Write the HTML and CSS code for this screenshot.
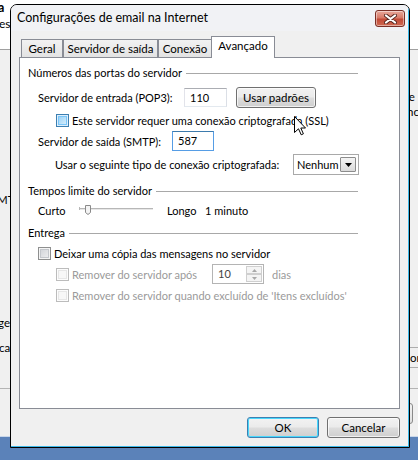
FILE: index.html
```html
<!DOCTYPE html>
<html lang="pt">
<head>
<meta charset="utf-8">
<link rel="stylesheet" href="styles.css">
</head>
<body>
<div class="backwin">
  <div class="backtop"></div>
  <div class="backline"></div>
  <span class="frag f-a">a</span>
  <span class="frag f-es">es</span>
  <span class="frag f-mt">MT</span>
  <span class="frag f-gen">gen</span>
  <span class="frag f-ca">ca</span>
  <span class="frag f-ie">ie</span>
  <span class="frag f-nc">nc</span>
  <div class="frag f-orbox">or</div>
  <div class="frag f-btn"></div>
</div>

<div class="dialog">
  <div class="inner">
    <div class="titlebar">
      <span class="title">Configurações de email na Internet</span>
      <div class="close">
        <svg width="13" height="10" viewBox="0 0 13 10"><path d="M2 1.5 L11 8.5 M11 1.5 L2 8.5" stroke="#5a2a22" stroke-width="4" stroke-linecap="round"/><path d="M2 1.5 L11 8.5 M11 1.5 L2 8.5" stroke="#fff" stroke-width="2.2" stroke-linecap="round"/></svg>
      </div>
    </div>
    <div class="client">
      <div class="tabs">
        <div class="tab t-geral">Geral</div>
        <div class="tab t-serv">Servidor de saída</div>
        <div class="tab t-con">Conexão</div>
        <div class="tab active t-av">Avançado</div>
      </div>
      <div class="panel">
        <div class="ghead">Números das portas do servidor</div>
        <div class="row r-pop">
          <span class="lbl w-pop">Servidor de entrada (POP3):</span>
          <div class="tbox w-in1">110</div>
          <div class="btn w-usar">Usar padrões</div>
        </div>
        <div class="row r-ssl">
          <span class="cb hover"></span>
          <span class="cbt">Este servidor requer uma conexão criptografada (SSL)</span>
        </div>
        <div class="row r-smtp">
          <span class="lbl w-smtp">Servidor de saída (SMTP):</span>
          <div class="tbox focus w-in2">587</div>
        </div>
        <div class="row r-combo">
          <span class="lbl w-combo">Usar o seguinte tipo de conexão criptografada:</span>
          <div class="combo">
            <span class="combo-text">Nenhum</span>
            <span class="combo-btn"><svg width="7" height="4" viewBox="0 0 7 4"><path d="M0 0 H7 L3.5 4 Z" fill="#000"/></svg></span>
          </div>
        </div>

        <div class="ghead g2">Tempos limite do servidor</div>
        <div class="row r-slider">
          <span class="lbl w-curto">Curto</span>
          <svg class="slider" width="74" height="15" viewBox="0 0 74 15">
            <rect x="0" y="5" width="74" height="1" fill="#b7b7b7"/>
            <rect x="0" y="6" width="74" height="1" fill="#e7e7e7"/>
            <rect x="0" y="4" width="1" height="3" fill="#b7b7b7"/>
            <path d="M6.5 2.5 H11.5 V9.5 L9 11.5 L6.5 9.5 Z" fill="#f4f4f4" stroke="#8a8a8a"/>
          </svg>
          <span class="lbl w-longo">Longo</span>
          <span class="lbl">1 minuto</span>
        </div>

        <div class="ghead g3">Entrega</div>
        <div class="row r-deixar">
          <span class="cb"></span>
          <span class="cbt">Deixar uma cópia das mensagens no servidor</span>
        </div>
        <div class="row r-rem1">
          <span class="cb disabled"></span>
          <span class="cbt dis w-rem">Remover do servidor após</span>
          <div class="spin">
            <span class="spin-text">10</span>
            <span class="spin-btns">
              <span class="sb"><svg width="5" height="3" viewBox="0 0 5 3"><path d="M0 3 H5 L2.5 0 Z" fill="#a8a8a8"/></svg></span>
              <span class="sb"><svg width="5" height="3" viewBox="0 0 5 3"><path d="M0 0 H5 L2.5 3 Z" fill="#a8a8a8"/></svg></span>
            </span>
          </div>
          <span class="dis dias">dias</span>
        </div>
        <div class="row r-rem2">
          <span class="cb disabled"></span>
          <span class="cbt dis">Remover do servidor quando excluído de 'Itens excluídos'</span>
        </div>
      </div>
      <div class="buttons">
        <div class="btn default w-ok">OK</div>
        <div class="btn w-cancel">Cancelar</div>
      </div>
    </div>
  </div>
</div>

<svg class="cursor" width="13" height="20" viewBox="0 0 13 20">
  <path d="M0.5 0.5 L0.5 16.5 L4.5 12.8 L7.2 18.8 L9.4 17.8 L6.8 12 L11.5 12 Z" fill="#fff" stroke="#000" stroke-linejoin="miter"/>
</svg>
</body>
</html>
```

FILE: styles.css
```css
* { box-sizing: border-box; }
html, body { margin: 0; padding: 0; }
body {
  width: 418px;
  height: 460px;
  overflow: hidden;
  position: relative;
  background: #5b82b9;
  font-family: Lato, "Noto Sans", sans-serif;
  font-size: 11px;
  color: #000;
}

/* window behind */
.backwin {
  height: 437px;
  background: #f0f0f0;
  border-bottom: 1px solid #c9d7ea;
  position: relative;
}
.backtop {
  height: 50px;
  background: #fff;
  border-bottom: 1px solid #a0a0a0;
}
.backline {
  position: absolute;
  left: 0; right: 0;
  top: 388px;
  border-top: 1px solid #b4b4b4;
}
.frag { position: absolute; line-height: 14px; white-space: nowrap; font-size: 11.5px; }
.f-a { left: -2px; top: 1px; font-weight: bold; font-size: 12.5px; }
.f-es { left: -1px; top: 17px; font-size: 12px; }
.f-mt { left: -3px; top: 193px; }
.f-gen { left: -2px; top: 316px; }
.f-ca { left: -1px; top: 341px; }
.f-ie { left: 406px; top: 90px; }
.f-nc { left: 407px; top: 105px; }
.f-orbox {
  left: 380px; top: 347px;
  width: 50px; height: 21px;
  border: 1px solid #adadad;
  padding-left: 29px;
  line-height: 19px;
}
.f-btn {
  left: 380px; top: 403px;
  width: 33px; height: 21px;
  border: 1px solid #8a8a8a;
  border-radius: 3px;
  background: linear-gradient(#f2f2f2, #e0e0e0);
}

/* dialog */
.dialog {
  position: absolute;
  left: 10px;
  top: 4px;
  width: 400px;
  height: 444px;
  border: 1px solid #000;
  border-radius: 7px 7px 0 0;
  background: #f0f0f0;
  overflow: hidden;
}
.inner {
  height: 100%;
  border-right: 1px solid #3cb9e9;
  border-bottom: 1px solid #3cb9e9;
  display: flex;
  flex-direction: column;
}
.titlebar {
  height: 26px;
  display: flex;
  align-items: flex-start;
  background: #f1f2f5;
}
.title {
  flex: 1;
  padding-left: 6px;
  padding-top: 4px;
  font-size: 12.5px;
  line-height: 17px;
}
.close {
  margin-top: 5px;
  margin-right: 3px;
  width: 30px;
  height: 17px;
  border: 1px solid #7a2f26;
  border-radius: 3px;
  background: linear-gradient(#e8a89b 0%, #d77a68 45%, #c24a37 55%, #cf6a52 100%);
  box-shadow: inset 0 0 0 1px rgba(255,255,255,0.45);
  display: flex;
  align-items: center;
  justify-content: center;
}

.client {
  flex: 1;
  padding: 5px 8px 8px 8px;
  display: flex;
  flex-direction: column;
}
.tabs {
  height: 21px;
  display: flex;
  align-items: flex-end;
  padding-left: 2px;
  position: relative;
  z-index: 1;
  font-size: 11.5px;
}
.tab {
  height: 18px;
  border: 1px solid #898c95;
  border-bottom: none;
  background: linear-gradient(#f2f2f2, #e3e3e3);
  line-height: 17px;
  text-align: center;
  white-space: nowrap;
}
.t-geral { width: 42px; }
.t-serv { width: 95px; margin-left: 0; }
.t-con { width: 54px; }
.t-av { width: 64px; margin-left: -1px; }
.tab.active {
  height: 22px;
  margin-bottom: -1px;
  background: #fff;
  line-height: 18px;
  position: relative;
  z-index: 2;
}

.panel {
  height: 352px;
  border: 1px solid #898c95;
  background: #fff;
  padding: 7px 41px 0 8px;
  display: flex;
  flex-direction: column;
}
.ghead {
  height: 15px;
  display: flex;
  align-items: center;
  white-space: nowrap;
}
.ghead::after {
  content: "";
  flex: 1;
  border-top: 1px solid #a8a8a8;
  margin-left: 4px;
  margin-top: 1px;
}
.g2 { margin-top: 8px; }
.g3 { margin-top: 7px; }

.row { display: flex; align-items: center; white-space: nowrap; }
.lbl { flex: none; }
.r-pop { margin-top: 7px; height: 21px; padding-left: 10px; }
.w-pop { width: 146px; }
.r-ssl { margin-top: 6px; height: 13px; padding-left: 28px; }
.r-smtp { margin-top: 4px; height: 20px; padding-left: 10px; }
.w-smtp { width: 134px; }
.r-combo { margin-top: 3px; height: 21px; padding-left: 27px; }
.w-combo { width: 238px; }
.r-slider { margin-top: 5px; height: 15px; padding-left: 10px; }
.w-curto { width: 41px; }
.slider { flex: none; margin-right: 14px; }
.w-longo { width: 38px; }
.r-deixar { margin-top: 6px; height: 15px; padding-left: 10px; }
.r-rem1 { margin-top: 3px; height: 20px; padding-left: 28px; }
.w-rem { width: 140px; }
.r-rem2 { margin-top: 4px; height: 15px; padding-left: 28px; }

.tbox {
  height: 19px;
  border: 1px solid #abadb3;
  border-left-color: #e2e3ea;
  border-right-color: #dbdfe6;
  border-bottom-color: #e3e9ef;
  background: #fff;
  padding-left: 5px;
  line-height: 17px;
  flex: none;
}
.w-in1 { width: 43px; }
.w-in2 { width: 42px; height: 20px; line-height: 18px; }
.tbox.focus { border-color: #569de5; border-top-color: #3d7bad; }

.btn {
  height: 21px;
  border: 1px solid #707070;
  border-radius: 3px;
  background: linear-gradient(#f2f2f2 0%, #ebebeb 48%, #dddddd 52%, #cfcfcf 100%);
  box-shadow: inset 0 0 0 1px rgba(255,255,255,0.7);
  text-align: center;
  line-height: 19px;
  flex: none;
  font-size: 11.5px;
}
.w-usar { width: 80px; margin-left: 9px; }
.btn.default {
  border-color: #3c7fb1;
  box-shadow: inset 0 0 0 1px #48d7fc;
}

.cb {
  width: 13px;
  height: 13px;
  flex: none;
  border: 1px solid #8e8f8f;
  background: linear-gradient(135deg, #cdd0d5 0%, #f2f2f3 100%);
  box-shadow: inset 0 0 0 1px #f4f4f4, inset 0 0 0 2px #c4c7cc;
}
.cb.hover {
  border-color: #3c7fb1;
  background: linear-gradient(135deg, #8ecbf4 0%, #e2f3fd 100%);
  box-shadow: inset 0 0 0 1px #deeefc, inset 0 0 0 2px #79c6f9;
}
.cb.disabled {
  border-color: #bcbcbc;
  background: #f7f7f7;
  box-shadow: inset 0 0 0 1px #fcfcfc, inset 0 0 0 2px #e6e6e6;
}
.cbt { margin-left: 3px; }
.dis { color: #9a9a9a; }

.combo {
  width: 66px;
  height: 21px;
  flex: none;
  border: 1px solid #a9a9a9;
  background: #fff;
  padding: 2px;
  display: flex;
  align-items: stretch;
}
.combo-text { flex: 1; line-height: 15px; padding-left: 1px; overflow: hidden; }
.combo-btn {
  width: 16px;
  flex: none;
  border: 1px solid #8c8c8c;
  border-radius: 1px;
  background: linear-gradient(#f4f4f4, #dadada);
  display: flex;
  align-items: center;
  justify-content: center;
}

.spin {
  width: 52px;
  height: 20px;
  flex: none;
  border: 1px solid #b4b4b4;
  background: #fff;
  display: flex;
}
.spin-text { flex: 1; padding-left: 5px; line-height: 18px; color: #444; }
.spin-btns {
  width: 17px;
  display: flex;
  flex-direction: column;
  padding: 1px 1px 1px 0;
}
.sb {
  flex: 1;
  border: 1px solid #cfcfcf;
  background: #f4f4f4;
  display: flex;
  align-items: center;
  justify-content: center;
}
.dias { margin-left: 8px; }

.buttons {
  margin-top: 8px;
  display: flex;
  justify-content: flex-end;
  gap: 8px;
}
.w-ok { width: 72px; }
.w-cancel { width: 73px; }

.cursor {
  position: absolute;
  left: 294px;
  top: 116px;
}
```
